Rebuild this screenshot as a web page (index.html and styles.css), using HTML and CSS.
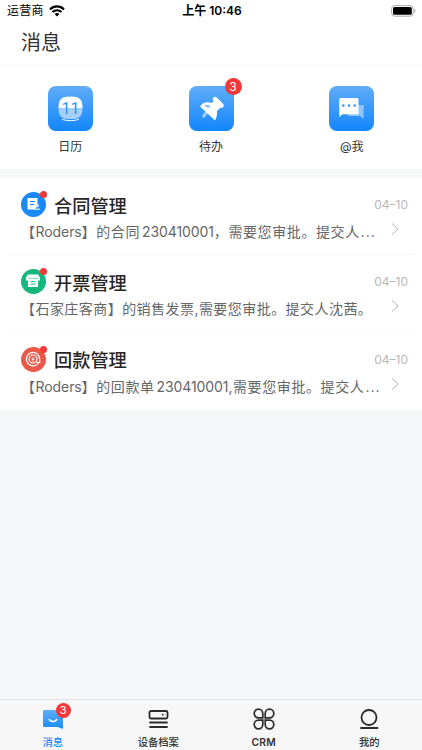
FILE: index.html
```html
<!DOCTYPE html>
<html lang="zh-CN">
<head>
  <meta charset="utf-8">
  <title>消息</title>
  <link rel="stylesheet" href="styles.css">
</head>
<body>
<div class="page">
  <div class="status">
    <div class="carrier">运营商
      <svg class="wifi" width="16" height="12" viewBox="0 0 16 12"><path d="M1 4.400C5 .400 11 .400 15 4.400M3.500 7C6 4.600 10 4.600 12.500 7" fill="none" stroke="#000" stroke-width="2.100"/><path d="M5.600 8.900C7 7.700 9 7.700 10.400 8.900L8 11.400z"/></svg>
    </div>
    <div class="clock">上午 10:46</div>
    <svg class="battery" width="26" height="12" viewBox="0 0 26 12"><rect x=".6" y=".6" width="21.6" height="10.6" rx="3" fill="#fff" stroke="#aaa"/><rect x="2" y="2" width="18.8" height="7.8" rx="1.6"/><path d="M23.5 4v4c1.600-.6 1.600-3.400 0-4z" fill="#aaa"/></svg>
  </div>
  <h1 class="title">消息</h1>

  <div class="apps">
    <div class="app">
      <div class="tile">
        <svg width="45" height="45" viewBox="0 0 45 45"><path d="M22.500 10.500c9 0 12 2.500 12 11.500H10.500c0-9 3-11.500 12-11.500z" fill="#fff"/><path d="M10.500 22h24c0 8.500-3 11-12 11s-12-2.500-12-11z" fill="#a6d0fc"/><path d="M14 33c4 2.200 13 2.200 17 0" fill="none" stroke="#fff" stroke-width="1"/><text x="22.600" y="28" text-anchor="middle" class="day">11</text></svg>
      </div>
      <span>日历</span>
    </div>
    <div class="app">
      <div class="tile">
        <svg width="45" height="45" viewBox="0 0 45 45"><path d="M18 26l-3.300 4" stroke="#9dccfc" stroke-width="3.400" stroke-linecap="round"/><path d="M25 15l6-1 1 7-4 4c.300 4-.500 7-2 9.500L11 20.500c2.500-4 7-5 11.500-3.500z" fill="#fff"/><path d="M26 13.200l6.500 6.300" stroke="#fff" stroke-width="4.600" stroke-linecap="round"/><path d="M15 20c2-1.500 4.500-1.500 6.500-.300L19.500 22z" fill="#8ec3fb"/></svg>
        <b class="badge">3</b>
      </div>
      <span>待办</span>
    </div>
    <div class="app">
      <div class="tile">
        <svg width="45" height="45" viewBox="0 0 45 45"><path d="M19 19h15.600v14l-3.600-3H19z" fill="#91c6fc"/><path d="M11.500 12H28c.900 0 1.500.600 1.500 1.500V27c0 .800-.600 1.300-1.500 1.300H13.500L10.300 31V13.500c0-.900.500-1.500 1.200-1.500z" fill="#fff"/><g fill="#2f92fa"><circle cx="14.300" cy="19.500" r="1.300"/><circle cx="20" cy="19.500" r="1.300"/><circle cx="25.700" cy="19.500" r="1.300"/></g></svg>
      </div>
      <span>@我</span>
    </div>
  </div>

  <div class="list">
    <div class="item">
      <div class="top">
        <div class="icon blue">
          <svg width="24" height="24" viewBox="0 0 24 24"><path d="M6.500 6h10v7.500L14 17.500H6.500z" fill="#fff"/><path d="M9 9.500h5M9 12.500h4" stroke="#1989fa" stroke-width="1.100"/><circle cx="16.500" cy="13.800" r="1.700" fill="#c5e1fe"/><path d="M13.500 18v-1.500h5.500V18z" fill="#c5e1fe"/></svg>
          <i class="dot"></i>
        </div>
        <h2>合同管理</h2>
        <span class="date">04–10</span>
      </div>
      <div class="desc"><p>【<span class="name">Roders</span>】的合同<span class="num">230410001</span>，需要您审批。提交人<span class="more">...</span></p>
        <svg class="arrow" width="8" height="12" viewBox="0 0 8 12"><path d="M1 .5l6 5.500-6 5.500"/></svg></div>
    </div>
    <div class="item">
      <div class="top">
        <div class="icon green">
          <svg width="24" height="24" viewBox="0 0 24 24"><path d="M7 5.500h10l2 3v3h-2V18H7v-6.500H5v-3z" fill="#fff"/><path d="M7 9.500h10" stroke="#8edfc2"/><path d="M9.500 12.500h5M9.500 15h5" stroke="#14b87c" stroke-width="1.100"/></svg>
          <i class="dot"></i>
        </div>
        <h2>开票管理</h2>
        <span class="date">04–10</span>
      </div>
      <div class="desc"><p class="plain">【石家庄客商】的销售发票,需要您审批。提交人沈茜。</p>
        <svg class="arrow" width="8" height="12" viewBox="0 0 8 12"><path d="M1 .5l6 5.500-6 5.500"/></svg></div>
    </div>
    <div class="item">
      <div class="top">
        <div class="icon red">
          <svg width="24" height="24" viewBox="0 0 24 24" fill="none" stroke="#fff"><path d="M17.500 16a6.700 6.700 0 1 1 1.200-4v3.500h-3.200" stroke-width="1.200"/><circle cx="12" cy="12" r="4" stroke-width="1.200"/><path d="M10.500 10L12 11.800 13.500 10M12 11.800v3M10.500 12.500h3" stroke-width=".8"/></svg>
          <i class="dot"></i>
        </div>
        <h2>回款管理</h2>
        <span class="date">04–10</span>
      </div>
      <div class="desc"><p>【<span class="name">Roders</span>】的回款单<span class="num">230410001</span>,需要您审批。提交人<span class="more">...</span></p>
        <svg class="arrow" width="8" height="12" viewBox="0 0 8 12"><path d="M1 .5l6 5.500-6 5.500"/></svg></div>
    </div>
  </div>

  <div class="tabs">
    <div class="tab active">
      <div class="tab-icon">
        <svg width="24" height="24" viewBox="0 0 24 24"><defs><linearGradient id="msg" x2="0" y2="1"><stop stop-color="#62adf8"/><stop offset="1" stop-color="#168bfa"/></linearGradient></defs><path d="M3.500 3h17c1 0 1.500.500 1.500 1.500V22l-5-2H3.500C2.500 20 2 19.500 2 18.500v-14C2 3.500 2.500 3 3.500 3z" fill="url(#msg)"/><path d="M8.300 12.700c2 2.300 5.400 2.300 7.400 0" fill="none" stroke="#fff" stroke-width="1.600" stroke-linecap="round"/></svg>
        <b class="badge">3</b>
      </div>
      <span>消息</span>
    </div>
    <div class="tab">
      <div class="tab-icon"><svg width="24" height="24" viewBox="0 0 24 24" fill="none" stroke="#2b2b2b" stroke-width="1.800" stroke-linecap="round"><rect x="3.500" y="4" width="18" height="7.500" rx="1.500"/><path d="M16.800 7.700h.1M4 15.500h17M4 20h17"/></svg></div>
      <span>设备档案</span>
    </div>
    <div class="tab">
      <div class="tab-icon"><svg width="24" height="24" viewBox="0 0 24 24" fill="none" stroke="#2b2b2b" stroke-width="1.700"><path d="M10.800 10.800H6.500A4.300 4.300 0 1 1 10.800 6.500zM13.200 10.800V6.500a4.300 4.300 0 1 1 4.300 4.300zM10.800 13.200v4.300a4.300 4.300 0 1 1-4.300-4.300zM13.200 13.200h4.300a4.300 4.300 0 1 1-4.300 4.300z"/></svg></div>
      <span class="crm">CRM</span>
    </div>
    <div class="tab">
      <div class="tab-icon"><svg width="24" height="24" viewBox="0 0 24 24" fill="none" stroke="#2b2b2b" stroke-width="1.800" stroke-linecap="round"><circle cx="12" cy="10.500" r="7.500"/><path d="M4 21h16.500"/></svg></div>
      <span>我的</span>
    </div>
  </div>
</div>
</body>
</html>
```
FILE: styles.css
```css
body {
  margin: 0;
  font-family: Inter, "Noto Sans CJK SC", sans-serif;
  color: #333;
  background: #f6f7f9;
}
h1, h2, p {
  margin: 0;
  font-weight: normal;
}
svg {
  display: block;
}
.page {
  display: flex;
  flex-direction: column;
  height: 750px;
}
.status {
  display: grid;
  grid-template-columns: 1fr auto 1fr;
  align-items: center;
  height: 22px;
  padding: 0 5px 0 7px;
  background: #fff;
  font-size: 12px;
  line-height: 22px;
  color: #000;
}
.carrier {
  display: flex;
  align-items: center;
  gap: 5px;
  letter-spacing: .3px;
}
.clock {
  font-weight: 600;
}
.battery {
  justify-self: end;
}
.title {
  height: 44px;
  padding-left: 21px;
  background: #fff;
  border-bottom: 1px solid #f9f9f9;
  font-size: 20px;
  line-height: 43px;
  box-sizing: border-box;
}

/* shortcuts */
.apps {
  display: flex;
  height: 103px;
  background: #fff;
}
.app {
  flex: 1;
  display: flex;
  flex-direction: column;
  align-items: center;
  padding-top: 20px;
  font-size: 12px;
  line-height: 18px;
}
.app span {
  margin-top: 7px;
}
.tile {
  position: relative;
  width: 45px;
  height: 45px;
  border-radius: 8px;
  background: linear-gradient(#60adf9, #1286fb);
}
.day {
  font-family: Roboto, sans-serif;
  font-size: 16px;
  fill: #2d91f8;
}
.badge {
  position: absolute;
  top: -8px;
  right: -8px;
  width: 17px;
  height: 17px;
  border-radius: 50%;
  background: #f43838;
  color: #fff;
  font-size: 12px;
  font-weight: normal;
  line-height: 17px;
  text-align: center;
}

/* messages */
.list {
  margin-top: 9px;
  background: #fff;
}
.item {
  height: 77.300px;
  box-sizing: border-box;
  padding: 14px 14px 0 21px;
  background: linear-gradient(#f9f9f9, #f9f9f9) no-repeat 8px 100% / 406px 1px;
}
.item:last-child {
  background: none;
}
.top {
  display: flex;
  align-items: center;
  height: 25px;
}
.top h2 {
  margin-left: 8px;
  font-size: 18.200px;
  font-weight: 500;
  color: #262626;
}
.icon {
  position: relative;
  width: 25px;
  height: 25px;
  border-radius: 50%;
}
.blue {
  background: #1989fa;
}
.green {
  background: #14b87c;
}
.red {
  background: #e95849;
}
.dot {
  position: absolute;
  top: -1px;
  right: -1px;
  width: 7px;
  height: 7px;
  border-radius: 50%;
  background: #f43838;
}
.date {
  margin-left: auto;
  font-size: 12px;
  color: #b8b8b8;
}
.desc {
  display: flex;
  justify-content: space-between;
  align-items: center;
  height: 28px;
  padding-right: 9px;
  color: #666;
}
.desc p {
  font-size: 14px;
  letter-spacing: .6px;
  white-space: nowrap;
}
.desc .plain {
  letter-spacing: .45px;
}
.name {
  letter-spacing: -.1px;
}
.num {
  letter-spacing: -.1px;
  margin-left: 2px;
}
.more {
  margin-left: 1px;
  letter-spacing: 1px;
}
.arrow {
  margin-top: -4px;
  fill: none;
  stroke: #b5b5b5;
}

/* bottom bar */
.tabs {
  display: flex;
  height: 51px;
  margin-top: auto;
  box-sizing: border-box;
  border-top: 1px solid #dedfe1;
  background: #f7f7f7;
}
.tab {
  flex: 1;
  display: flex;
  flex-direction: column;
  align-items: center;
  padding-top: 7px;
  font-size: 10.300px;
  font-weight: 500;
  line-height: 16px;
}
.tab-icon {
  position: relative;
  height: 27px;
}
.tab .badge {
  top: -4px;
  right: -6px;
  width: 15px;
  height: 15px;
  font-size: 11px;
  line-height: 15px;
}
.active {
  color: #1989fa;
}
.crm {
  font-weight: 600;
  letter-spacing: .3px;
}
```
